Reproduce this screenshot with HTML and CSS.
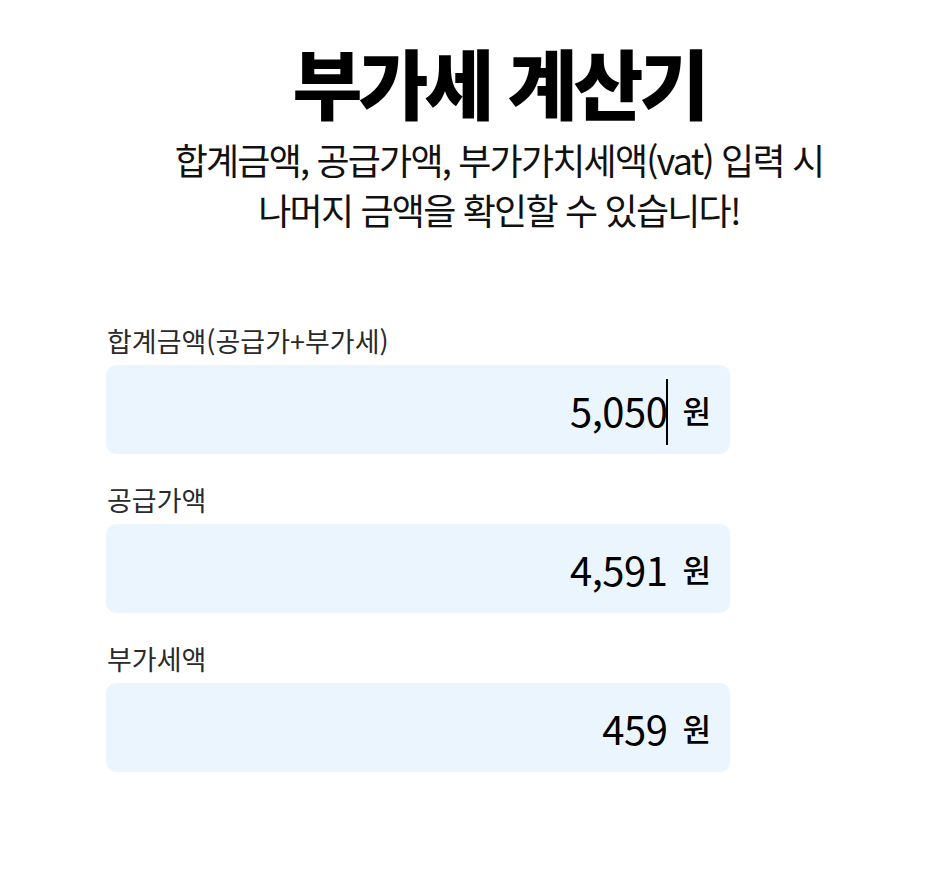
FILE: index.html
```html
<!DOCTYPE html>
<html lang="ko">
	<head>
		<meta charset="UTF-8"/>
		<meta name="viewport" content="width=device-width, initial-scale=1"/>
		<title>부가세 계산기</title>
		<link rel="stylesheet" href="styles.css">
	</head>
	<body>
		<div class="page">
			<div class="header">
				<h1 class="title">부가세 계산기</h1>
				<p class="desc">합계금액, 공급가액, 부가가치세액(vat) 입력 시<br/>나머지 금액을 확인할 수 있습니다!</p>
			</div>

			<form class="calc">
				<div class="field">
					<label class="field-label">합계금액(공급가+부가세)</label>
					<div class="field-box">
						<span class="field-value focused">5,050</span>
						<span class="field-unit">원</span>
					</div>
				</div>

				<div class="field">
					<label class="field-label">공급가액</label>
					<div class="field-box">
						<span class="field-value">4,591</span>
						<span class="field-unit">원</span>
					</div>
				</div>

				<div class="field">
					<label class="field-label">부가세액</label>
					<div class="field-box">
						<span class="field-value">459</span>
						<span class="field-unit">원</span>
					</div>
				</div>
			</form>
		</div>
	</body>
</html>
```

FILE: styles.css
```css
html, body {
	margin: 0;
	padding: 0;
	background: white;
	color: black;
	font-family: "Noto Sans CJK KR", "Noto Sans", sans-serif;
}

.page {
	padding-top: 36px;
}

.header {
	padding-left: 72px;
	text-align: center;
}

.title {
	margin: 0;
	font-size: 76px;
	font-weight: 800;
	letter-spacing: -4px;
	line-height: 90px;
}

.desc {
	margin: 8px 0 0 0;
	font-size: 36px;
	font-weight: 400;
	letter-spacing: -1.8px;
	line-height: 50px;
	color: #111;
}

.calc {
	width: 624px;
	margin: 90px 0 0 106px;
	display: flex;
	flex-direction: column;
	gap: 29px;
}

.field {
	display: flex;
	flex-direction: column;
	gap: 7px;
}

.field-label {
	font-size: 27px;
	font-weight: 400;
	line-height: 34px;
	color: #2a2a2a;
	padding-left: 1px;
}

.field-box {
	height: 89px;
	border-radius: 10px;
	background: #ebf5fe;
	box-sizing: border-box;
	padding: 0 19px 0 20px;
	display: flex;
	align-items: center;
	justify-content: flex-end;
	gap: 15px;
}

.field-value {
	position: relative;
	font-size: 40px;
	font-weight: 400;
	letter-spacing: -0.5px;
}

.field-value.focused::after {
	content: "";
	position: absolute;
	right: -1px;
	top: -2px;
	bottom: -6px;
	border-right: 2px solid black;
}

.field-unit {
	font-size: 31px;
	font-weight: 500;
}
```
